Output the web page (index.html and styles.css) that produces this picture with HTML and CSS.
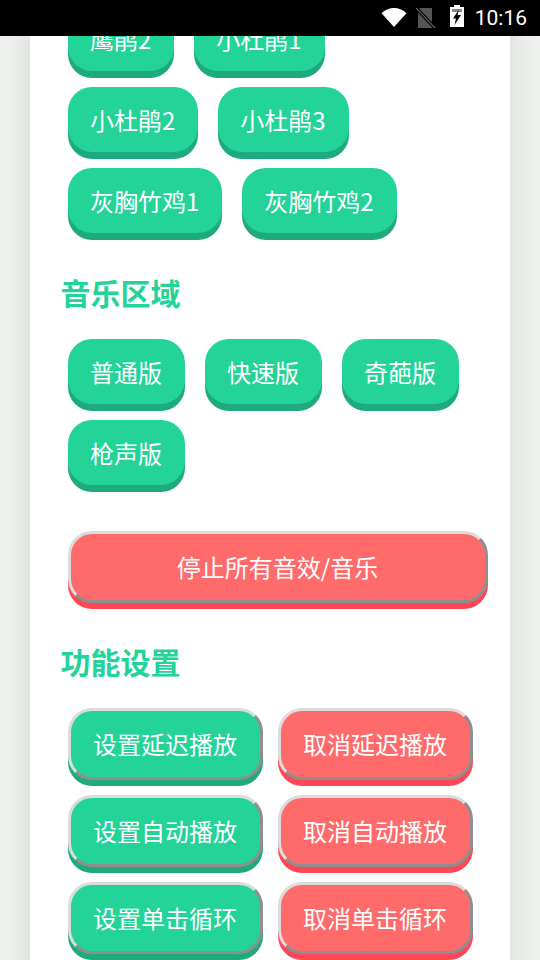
FILE: index.html
```html
<!DOCTYPE html>
<html lang="zh-CN">
<head>
    <meta charset="UTF-8">
    <meta name="viewport" content="width=device-width, initial-scale=1.0">
    <title>音效</title>
    <link rel="stylesheet" href="styles.css">
</head>
<body>
    <div class="status-bar">
        <svg class="icon-wifi" viewBox="0 0 26 20" width="26" height="20">
            <path d="M0.500 5.200C3.800 2 8.200 0 13 0s9.200 2 12.500 5.200L13 19z" fill="#fff"/>
        </svg>
        <svg class="icon-sim" viewBox="0 0 20 20" width="20" height="20">
            <path d="M4 0h12v20H2V2z" fill="#555"/>
            <path d="M1 1l19 20" stroke="#000" stroke-width="3.500"/>
            <path d="M0 0l20 21" stroke="#666" stroke-width="1.200"/>
        </svg>
        <svg class="icon-battery" viewBox="0 0 14 22" width="14" height="22">
            <path d="M4 0h6v2h4v20H0V2h4z" fill="#fff"/>
            <path d="M2 4h10v3H2z" fill="#000" opacity="0.450"/>
            <path d="M9 4.500L3 13.500h3l-1.500 6.500 6.500-10H7.500z" fill="#000"/>
        </svg>
        <span class="clock">10:16</span>
    </div>

    <div class="screen">
        <div class="card">
            <div class="btn-list">
                <button class="btn">鹰鹃2</button>
                <button class="btn">小杜鹃1</button>
                <button class="btn">小杜鹃2</button>
                <button class="btn">小杜鹃3</button>
                <button class="btn">灰胸竹鸡1</button>
                <button class="btn">灰胸竹鸡2</button>
            </div>

            <h2 class="section-title">音乐区域</h2>
            <div class="btn-list">
                <button class="btn">普通版</button>
                <button class="btn">快速版</button>
                <button class="btn">奇葩版</button>
                <button class="btn">枪声版</button>
            </div>

            <button class="btn-outset stop red">停止所有音效/音乐</button>

            <h2 class="section-title settings-title">功能设置</h2>
            <div class="settings-grid">
                <button class="btn-outset">设置延迟播放</button>
                <button class="btn-outset red">取消延迟播放</button>
                <button class="btn-outset">设置自动播放</button>
                <button class="btn-outset red">取消自动播放</button>
                <button class="btn-outset">设置单击循环</button>
                <button class="btn-outset red">取消单击循环</button>
            </div>
        </div>
    </div>
</body>
</html>
```

FILE: styles.css
```css
* {
    box-sizing: border-box;
}
html, body {
    margin: 0;
    padding: 0;
}
body {
    width: 540px;
    height: 960px;
    overflow: hidden;
    background-color: #f0f2ef;
    font-family: "Noto Sans CJK SC", "Noto Sans", sans-serif;
}
.status-bar {
    height: 36px;
    background-color: #000;
    display: flex;
    align-items: center;
    justify-content: flex-end;
    padding-right: 13px;
}
.icon-wifi {
    margin-right: 9px;
}
.icon-sim {
    margin-right: 14px;
}
.icon-battery {
    margin-right: 11px;
    margin-bottom: 4px;
}
.clock {
    font-family: Roboto, sans-serif;
    font-size: 21px;
    color: #fff;
}
.screen {
    height: 924px;
    overflow: hidden;
}
.card {
    width: 480px;
    margin-left: 30px;
    margin-top: -30px;
    padding: 0 22px 0 31px;
    height: 1000px;
    background-color: #fff;
    box-shadow: 0 0 30px rgba(0, 0, 0, 0.11);
}
.btn-list {
    display: flex;
    flex-wrap: wrap;
    gap: 16px 20px;
    padding: 0 22px 0 7px;
}
.btn {
    height: 65px;
    padding: 0 23px 0 22px;
    border: none;
    border-radius: 24px;
    background-color: #23d398;
    box-shadow: 0 7px 0 #1fa97f;
    color: #fff;
    font-family: inherit;
    font-size: 24px;
}
.section-title {
    margin: 0 0 0 -0.500px;
    padding-top: 37px;
    height: 106px;
    font-size: 30px;
    line-height: 44px;
    font-weight: 700;
    color: #23d398;
}
.btn-outset {
    height: 72px;
    padding: 0 1px 2px 0;
    border: 3px solid;
    border-color: #dcdcdc #8f8f8f #8f8f8f #dcdcdc;
    border-radius: 24px;
    background-color: #23d398;
    box-shadow: 0 6px 0 #1fa97f;
    color: #fff;
    font-family: inherit;
    font-size: 24px;
}
.btn-outset.red {
    background-color: #ff6b6b;
    box-shadow: 0 6px 0 #ff4757;
}
.stop {
    display: block;
    width: 420px;
    margin: 46px 0 0 7px;
}
.settings-title {
    padding-top: 36px;
    height: 105px;
}
.settings-grid {
    display: grid;
    grid-template-columns: 195px 195px;
    column-gap: 15px;
    row-gap: 15px;
    padding-left: 7px;
}
```
